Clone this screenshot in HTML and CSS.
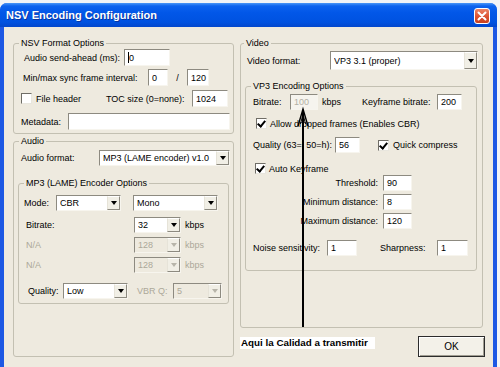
FILE: index.html
```html
<!DOCTYPE html>
<html>
<head>
<meta charset="utf-8">
<title>NSV Encoding Configuration</title>
<link rel="stylesheet" href="styles.css">
</head>
<body>
<div class="window">
  <div class="titlebar">
    <span class="title">NSV Encoding Configuration</span>
    <span class="close"><svg width="10" height="10" viewBox="0 0 10 10"><path d="M1.5 1.5 L8.5 8.5 M8.5 1.5 L1.5 8.5" stroke="#fff" stroke-width="2" stroke-linecap="round"/></svg></span>
  </div>
  <div class="client">
    <div class="col col-left">
      <fieldset class="group pb3">
        <legend class="ml5">NSV Format Options</legend>
        <div class="row h17">
          <span class="lbl ml10 w100">Audio send-ahead (ms):</span>
          <span class="edit w46"><i class="caret"></i>0</span>
        </div>
        <div class="row h17 mt3">
          <span class="lbl ml9 w125">Min/max sync frame interval:</span>
          <span class="edit w20">0</span>
          <span class="slash w19">/</span>
          <span class="edit w22">120</span>
        </div>
        <div class="row h17 mt4">
          <span class="chk ml7"></span>
          <span class="lbl ml4 w70">File header</span>
          <span class="lbl w86">TOC size (0=none):</span>
          <span class="edit w36">1024</span>
        </div>
        <div class="row h17 mt6">
          <span class="lbl ml7 w47">Metadata:</span>
          <span class="edit w162"></span>
        </div>
      </fieldset>

      <fieldset class="group grow mt2">
        <legend class="ml5">Audio</legend>
        <div class="row mt3">
          <span class="lbl ml7 w78">Audio format:</span>
          <span class="select w131"><span class="txt">MP3 (LAME encoder) v1.0</span><span class="dd"></span></span>
        </div>
        <fieldset class="group mp3 mt12 ml4 pb4">
          <legend class="ml5">MP3 (LAME) Encoder Options</legend>
          <div class="row mt6">
            <span class="lbl ml5 w32">Mode:</span>
            <span class="select w65"><span class="txt">CBR</span><span class="dd"></span></span>
            <span class="select ml12 w85"><span class="txt">Mono</span><span class="dd"></span></span>
          </div>
          <div class="row mt6">
            <span class="lbl ml7 w108">Bitrate:</span>
            <span class="select w47"><span class="txt">32</span><span class="dd"></span></span>
            <span class="lbl ml4">kbps</span>
          </div>
          <div class="row mt4 off">
            <span class="lbl ml7 w108">N/A</span>
            <span class="select dis w47"><span class="txt">128</span><span class="dd"></span></span>
            <span class="lbl ml4">kbps</span>
          </div>
          <div class="row mt4 off">
            <span class="lbl ml7 w108">N/A</span>
            <span class="select dis w47"><span class="txt">128</span><span class="dd"></span></span>
            <span class="lbl ml4">kbps</span>
          </div>
          <div class="row mt10">
            <span class="lbl ml9 w35">Quality:</span>
            <span class="select w65"><span class="txt">Low</span><span class="dd"></span></span>
            <span class="lbl ml9 w36 off">VBR Q:</span>
            <span class="select dis w49"><span class="txt">5</span><span class="dd"></span></span>
          </div>
        </fieldset>
      </fieldset>
    </div>

    <div class="col col-right">
      <fieldset class="group pb56">
        <legend class="ml3">Video</legend>
        <div class="row h19 mt2">
          <span class="lbl ml6 w83">Video format:</span>
          <span class="select w148"><span class="txt">VP3 3.1 (proper)</span><span class="dd"></span></span>
        </div>
        <fieldset class="group vp3 mt11 ml4 pb14">
          <legend class="ml5">VP3 Encoding Options</legend>
          <div class="row mt2">
            <span class="lbl ml7 w37">Bitrate:</span>
            <span class="edit dis w28">100</span>
            <span class="lbl ml4 w40">kbps</span>
            <span class="lbl w75">Keyframe bitrate:</span>
            <span class="edit w25">200</span>
          </div>
          <div class="row h13 mt7">
            <span class="chk on ml10"></span>
            <span class="lbl ml3">Allow dropped frames (Enables CBR)</span>
          </div>
          <div class="row mt7">
            <span class="lbl ml7 w82">Quality (63=l 50=h):</span>
            <span class="edit w25">56</span>
            <span class="chk on ml18"></span>
            <span class="lbl ml4">Quick compress</span>
          </div>
          <div class="row h13 mt9">
            <span class="chk on ml9"></span>
            <span class="lbl ml3">Auto Keyframe</span>
          </div>
          <div class="row">
            <span class="lbl ml11 w121 right">Threshold:</span>
            <span class="edit ml5 w29">90</span>
          </div>
          <div class="row mt3">
            <span class="lbl ml11 w121 right">Minimum distance:</span>
            <span class="edit ml5 w29">8</span>
          </div>
          <div class="row mt3">
            <span class="lbl ml11 w121 right">Maximum distance:</span>
            <span class="edit ml5 w29">120</span>
          </div>
          <div class="row mt11">
            <span class="lbl ml7 w74">Noise sensitivity:</span>
            <span class="edit w30">1</span>
            <span class="lbl ml23 w57">Sharpness:</span>
            <span class="edit w31">1</span>
          </div>
        </fieldset>
      </fieldset>
      <div class="btnrow">
        <button class="ok">OK</button>
      </div>
    </div>
  </div>
</div>

<svg class="arrow" width="500" height="367" viewBox="0 0 500 367">
  <line x1="303" y1="110" x2="303" y2="327" stroke="#000" stroke-width="2"/>
  <path d="M298 126 L303 109 L308 126" fill="none" stroke="#000" stroke-width="1.4"/>
  <path d="M300.5 124 L303 114 L305.5 124" fill="none" stroke="#000" stroke-width="1"/>
</svg>
<div class="note">Aqui la Calidad a transmitir</div>
</body>
</html>
```

FILE: styles.css
```css
* { box-sizing: border-box; }

body {
  margin: 0;
  width: 500px;
  height: 367px;
  overflow: hidden;
  position: relative;
  background: #f2f4f7;
  font-family: "Liberation Sans", Arial, sans-serif;
  font-size: 9px;
  color: #000;
}

.window {
  margin-top: 3px;
  width: 497px;
  height: 364px;
  background: #1d58e4;
  border-radius: 7px 7px 0 0;
  display: flex;
  flex-direction: column;
}

.titlebar {
  height: 24px;
  flex: none;
  display: flex;
  align-items: center;
  justify-content: space-between;
  padding: 0 7px 0 6px;
  border-radius: 7px 7px 0 0;
  background: linear-gradient(#4a97f7 0, #0d63ee 3px, #0257e8 40%, #0052e0 80%, #0347cc 100%);
}

.title {
  color: #fff;
  font-weight: bold;
  font-size: 11px;
  text-shadow: 1px 1px 0 #0b35a0;
}

.close {
  width: 16px;
  height: 16px;
  margin-top: 1px;
  border: 1px solid #fff;
  border-radius: 3px;
  background: linear-gradient(#ec8466, #db5232 55%, #c8401f);
  display: flex;
  align-items: center;
  justify-content: center;
}

.client {
  flex: 1;
  margin: 0 4px 3px;
  background: #eeeadf;
  display: flex;
  gap: 6px;
  padding: 11px 10px 11px 9px;
}

.col { display: flex; flex-direction: column; }
.col-left { width: 221px; }
.col-right { width: 243px; }

.group {
  margin: 0;
  padding: 0;
  min-width: 0;
  border: 1px solid #c3c0b2;
  border-radius: 3px;
}

legend {
  padding: 0 2px;
  line-height: 11px;
  font-size: 9px;
}

.grow { flex: 1; }
.mp3 { width: 211px; }
.vp3 { width: 232px; }

.row {
  display: flex;
  align-items: center;
  height: 16px;
  white-space: nowrap;
}
.row > * { flex: none; }
.h13 { height: 13px; }
.h17 { height: 17px; }
.h19 { height: 19px; }

.lbl { display: block; }
.right { text-align: right; }
.off, .off .lbl { color: #aca899; }
.slash { text-align: center; }

.edit {
  height: 100%;
  background: #fff;
  border: 1px solid;
  border-color: #8d8a80 #f7f5ee #f7f5ee #8d8a80;
  padding-left: 3px;
  display: flex;
  align-items: center;
  overflow: hidden;
}
.edit.dis { background: #f6f4ee; color: #b3b0a5; }

.caret {
  display: block;
  width: 1px;
  height: 11px;
  background: #000;
}

.select {
  height: 100%;
  background: #fff;
  border: 1px solid;
  border-color: #8d8a80 #f7f5ee #f7f5ee #8d8a80;
  padding-left: 3px;
  display: flex;
  align-items: center;
  overflow: hidden;
}
.select .txt {
  flex: 1;
  min-width: 0;
  overflow: hidden;
  white-space: nowrap;
}
.select .dd {
  flex: none;
  width: 13px;
  height: 100%;
  background: #f1efe6;
  border: 1px solid;
  border-color: #fff #8d8a80 #8d8a80 #e6e3d8;
  display: flex;
  align-items: center;
  justify-content: center;
}
.select .dd::after {
  content: "";
  border-left: 3.5px solid transparent;
  border-right: 3.5px solid transparent;
  border-top: 4px solid #000;
}
.select.dis { background: #eeeadf; color: #aca899; }
.select.dis .dd::after { border-top-color: #b8b5aa; }

.chk {
  width: 11px;
  height: 11px;
  background: #fff;
  border: 1px solid;
  border-color: #6f6d66 #e8e6de #e8e6de #6f6d66;
  position: relative;
}
.chk.on::after {
  content: "";
  position: absolute;
  left: 2px;
  top: 0px;
  width: 3px;
  height: 6px;
  border: solid #000;
  border-width: 0 2px 2px 0;
  transform: rotate(40deg);
}

.btnrow {
  display: flex;
  justify-content: flex-end;
  margin-top: 8px;
  margin-right: -2px;
}
.ok {
  width: 67px;
  height: 21px;
  padding: 0;
  font-family: "Liberation Sans", Arial, sans-serif;
  font-size: 10px;
  color: #000;
  background: #f3f1e9;
  border: 1px solid #2c2c2c;
  box-shadow: inset 1px 1px 0 #fff, inset -1px -1px 0 #a09d92;
}

.arrow {
  position: absolute;
  left: 0;
  top: 0;
  pointer-events: none;
}

.note {
  position: absolute;
  left: 240px;
  top: 337px;
  width: 135px;
  height: 12px;
  background: #fff;
  padding-left: 1px;
  font-weight: bold;
  font-size: 9.8px;
  line-height: 12px;
  white-space: nowrap;
}

/* spacing helpers */
.mt2 { margin-top: 2px; }
.mt3 { margin-top: 3px; }
.mt4 { margin-top: 4px; }
.mt6 { margin-top: 6px; }
.mt7 { margin-top: 7px; }
.mt9 { margin-top: 9px; }
.mt10 { margin-top: 10px; }
.mt11 { margin-top: 11px; }
.mt12 { margin-top: 12px; }
.pb3 { padding-bottom: 3px; }
.pb4 { padding-bottom: 4px; }
.pb14 { padding-bottom: 14px; }
.pb56 { padding-bottom: 56px; }
.ml3 { margin-left: 3px; }
.ml4 { margin-left: 4px; }
.ml5 { margin-left: 5px; }
.ml6 { margin-left: 6px; }
.ml7 { margin-left: 7px; }
.ml9 { margin-left: 9px; }
.ml10 { margin-left: 10px; }
.ml11 { margin-left: 11px; }
.ml12 { margin-left: 12px; }
.ml18 { margin-left: 18px; }
.ml23 { margin-left: 23px; }

.w19 { width: 19px; }
.w20 { width: 20px; }
.w22 { width: 22px; }
.w25 { width: 25px; }
.w28 { width: 28px; }
.w29 { width: 29px; }
.w30 { width: 30px; }
.w31 { width: 31px; }
.w32 { width: 32px; }
.w35 { width: 35px; }
.w36 { width: 36px; }
.w37 { width: 37px; }
.w40 { width: 40px; }
.w46 { width: 46px; }
.w47 { width: 47px; }
.w49 { width: 49px; }
.w57 { width: 57px; }
.w65 { width: 65px; }
.w70 { width: 70px; }
.w74 { width: 74px; }
.w75 { width: 75px; }
.w78 { width: 78px; }
.w82 { width: 82px; }
.w83 { width: 83px; }
.w85 { width: 85px; }
.w86 { width: 86px; }
.w100 { width: 100px; }
.w108 { width: 108px; }
.w121 { width: 121px; }
.w125 { width: 125px; }
.w131 { width: 131px; }
.w148 { width: 148px; }
.w162 { width: 162px; }
```
